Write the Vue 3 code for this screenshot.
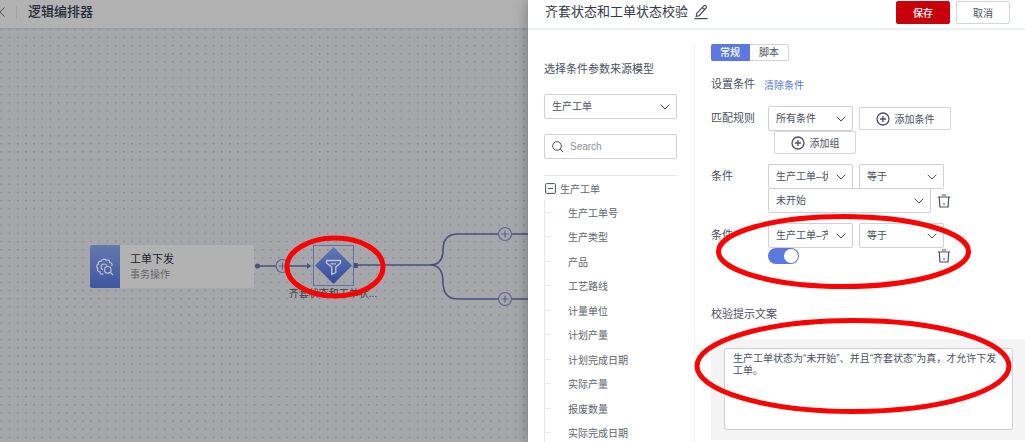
<script setup>
import { ref } from 'vue'

const model = ref('生产工单')
const keyword = ref('')
const matchRule = ref('所有条件')
const fieldA = ref('生产工单–状态')
const fieldB = ref('生产工单–齐套状态')
const operatorA = ref('等于')
const operatorB = ref('等于')
const valueA = ref('未开始')
const kitReady = ref(true)
const message = ref('生产工单状态为“未开始”、并且“齐套状态”为真，才允许下发工单。')

const fields = [
  '生产工单号',
  '生产类型',
  '产品',
  '工艺路线',
  '计量单位',
  '计划产量',
  '计划完成日期',
  '实际产量',
  '报废数量',
  '实际完成日期',
]
</script>

<template>
  <div class="page">
    <section class="workspace">
      <header class="topbar">
        <button class="back" type="button" aria-label="返回">
          <svg width="6" height="12" viewBox="0 0 6 12"><path d="M4.500 1.500L0 6l4.500 4.500" /></svg>
        </button>
        <span class="bar"></span>
        <h1>逻辑编排器</h1>
      </header>

      <div class="canvas">
        <svg class="edges" width="100%" height="100%" aria-hidden="true">
          <defs>
            <pattern id="dots" x="-3" y="-3" width="8.163" height="8.163" patternUnits="userSpaceOnUse">
              <circle cx="4.3" cy="4.3" r="0.8" fill="#85878d" stroke="none" />
            </pattern>
          </defs>
          <rect width="100%" height="100%" fill="url(#dots)" stroke="none" />
          <g fill="none" stroke="#48517f" stroke-width="1.6">
            <path d="M258 238H309" />
            <path d="M357 237H430C438 237 443 232 443 222C443 212 448 206 458 206H540" />
            <path d="M430 237C438 237 443 242 443 254C443 265 448 271 458 271H540" />
          </g>
          <g fill="#48517f" stroke="none">
            <circle cx="257.500" cy="238" r="2.500" />
            <path d="M307 235l4 3-4 3z" />
            <rect x="353" y="235" width="5" height="5" rx="1" />
          </g>
          <g fill="#a5a7ad" stroke="#5d668f" stroke-width="1.2">
            <circle cx="282.500" cy="238" r="6.500" />
            <circle cx="505" cy="206" r="6.500" />
            <circle cx="505" cy="271" r="6.500" />
            <path d="M279 238h7M282.500 234.500v7M501.500 206h7M505 202.500v7M501.500 271h7M505 267.500v7" />
          </g>
        </svg>

        <article class="task">
          <div class="task-icon">
            <svg width="18" height="18" viewBox="0 0 18 18">
              <path d="M7.300 15.800C5.800 17 3.700 15.900 4 13.900 2 14 .7 12 2 10.400.1 9.400.3 6.800 2.400 6.200 1.700 4.200 3.400 2.700 5.200 3.300 5.900 1 8.700.4 10 2.300c1.800-1 3.800.2 3.700 2.200 2 .1 3 2.200 1.900 3.700M7 11.900C3.800 10.300 4.700 6 8 6c1.500 0 2.400.7 2.900 1.800" />
              <circle cx="11.800" cy="11.800" r="3.300" />
              <path d="M14.200 14.200L17 17" />
            </svg>
          </div>
          <div class="task-text">
            <strong>工单下发</strong>
            <span>事务操作</span>
          </div>
        </article>

        <div class="decision">
          <svg width="41" height="41" viewBox="0 0 41 41">
            <defs>
              <linearGradient id="blue" x1="0" y1="0" x2="0" y2="1">
                <stop offset="0" stop-color="#6178b6" />
                <stop offset="1" stop-color="#354b9c" />
              </linearGradient>
            </defs>
            <rect x=".5" y=".5" width="40" height="40" fill="none" stroke="#5e71aa" />
            <path d="M20.500 2L39 20.500 20.500 39 2 20.500z" fill="url(#blue)" stroke="none" />
            <path d="M13.500 15.500h14v2.500l-4.700 4v5.500l-4 2v-7.500L13.500 18zM17.500 18.800h5.500" fill="none" stroke="#c3c7d4" stroke-width="1.300" stroke-linejoin="round" />
          </svg>
          <span>齐套状态和工单状...</span>
        </div>
      </div>
    </section>

    <aside class="drawer">
      <header class="drawer-head">
        <h2>齐套状态和工单状态校验</h2>
        <button class="icon-btn edit" type="button" aria-label="编辑名称">
          <svg width="14" height="16" viewBox="0 0 14 16"><path d="M2.200 12.500L2.800 9.300 9.800 1.900q1.100-1 2.100 0t.1 2.100L5.200 11.600zM8.300 3.400l2.200 2.100M.3 14.700h13.400" /></svg>
        </button>
        <span class="spacer"></span>
        <button class="btn primary" type="button">保存</button>
        <button class="btn" type="button">取消</button>
      </header>

      <div class="drawer-body">
        <section class="source">
          <h3><label for="model">选择条件参数来源模型</label></h3>
          <div class="select">
            <select id="model" v-model="model"><option>生产工单</option></select>
            <svg width="10" height="6" viewBox="0 0 10 6"><path d="M.7.700L5 5 9.300.700" /></svg>
          </div>
          <div class="search">
            <svg width="12" height="12" viewBox="0 0 12 12"><circle cx="5" cy="5" r="4.300" /><path d="M8.200 8.200l3 3" /></svg>
            <input v-model="keyword" type="text" placeholder="Search" aria-label="Search" />
          </div>
          <div class="tree">
            <div class="root">
              <svg width="11" height="11" viewBox="0 0 11 11"><rect x=".6" y=".6" width="9.800" height="9.800" rx="1" /><path d="M3 5.500h5" /></svg>
              <span>生产工单</span>
            </div>
            <ul>
              <li v-for="field in fields" :key="field">{{ field }}</li>
            </ul>
          </div>
        </section>

        <section class="settings">
          <div class="tabs">
            <button class="tab active" type="button">常规</button>
            <button class="tab" type="button">脚本</button>
          </div>

          <div class="title-row">
            <h3>设置条件</h3>
            <a href="#">清除条件</a>
          </div>

          <div class="field">
            <label for="rule">匹配规则</label>
            <div>
              <div class="line">
                <div class="select short">
                  <select id="rule" v-model="matchRule"><option>所有条件</option></select>
                  <svg width="10" height="6" viewBox="0 0 10 6"><path d="M.7.700L5 5 9.300.700" /></svg>
                </div>
                <button class="btn add" type="button">
                  <svg width="14" height="14" viewBox="0 0 14 14"><circle cx="7" cy="7" r="6" /><path d="M4 7h6M7 4v6" /></svg>添加条件
                </button>
              </div>
              <button class="btn add group" type="button">
                <svg width="14" height="14" viewBox="0 0 14 14"><circle cx="7" cy="7" r="6" /><path d="M4 7h6M7 4v6" /></svg>添加组
              </button>
            </div>
          </div>

          <div class="field">
            <label for="fieldA">条件</label>
            <div>
              <div class="line">
                <div class="select short">
                  <select id="fieldA" v-model="fieldA"><option>生产工单–状态</option></select>
                  <svg width="10" height="6" viewBox="0 0 10 6"><path d="M.7.700L5 5 9.300.700" /></svg>
                </div>
                <div class="select short">
                  <select v-model="operatorA" aria-label="运算符"><option>等于</option></select>
                  <svg width="10" height="6" viewBox="0 0 10 6"><path d="M.7.700L5 5 9.300.700" /></svg>
                </div>
              </div>
              <div class="line value">
                <div class="select long">
                  <select v-model="valueA" aria-label="值"><option>未开始</option></select>
                  <svg width="10" height="6" viewBox="0 0 10 6"><path d="M.7.700L5 5 9.300.700" /></svg>
                </div>
                <button class="icon-btn" type="button" aria-label="删除条件">
                  <svg width="14" height="14" viewBox="0 0 14 14"><path d="M.7 3h12.600M4.800 1h4.400M2.300 3l.6 10h8.200l.6-10M7 9v1.800" /></svg>
                </button>
              </div>
            </div>
          </div>

          <div class="field">
            <label for="fieldB">条件</label>
            <div>
              <div class="line">
                <div class="select short">
                  <select id="fieldB" v-model="fieldB"><option>生产工单–齐套状态</option></select>
                  <svg width="10" height="6" viewBox="0 0 10 6"><path d="M.7.700L5 5 9.300.700" /></svg>
                </div>
                <div class="select short">
                  <select v-model="operatorB" aria-label="运算符"><option>等于</option></select>
                  <svg width="10" height="6" viewBox="0 0 10 6"><path d="M.7.700L5 5 9.300.700" /></svg>
                </div>
              </div>
              <div class="line switch-line">
                <input v-model="kitReady" class="switch" type="checkbox" aria-label="齐套状态" />
                <button class="icon-btn" type="button" aria-label="删除条件">
                  <svg width="14" height="14" viewBox="0 0 14 14"><path d="M.7 3h12.600M4.800 1h4.400M2.300 3l.6 10h8.200l.6-10M7 9v1.800" /></svg>
                </button>
              </div>
            </div>
          </div>

          <h3 class="message-label"><label for="message">校验提示文案</label></h3>
          <div class="message">
            <textarea id="message" v-model="message"></textarea>
          </div>
        </section>
      </div>
    </aside>

    <svg class="marks" width="100%" height="100%" aria-hidden="true">
      <ellipse cx="335" cy="267" rx="48" ry="29" />
      <ellipse cx="843.500" cy="251.500" rx="125" ry="35" />
      <ellipse cx="853" cy="366" rx="156" ry="45.500" />
    </svg>
  </div>
</template>

<style>
body {
  margin: 0;
}
</style>

<style scoped>
* {
  box-sizing: border-box;
}
.page {
  position: relative;
  display: flex;
  height: 100vh;
  overflow: hidden;
  font-family: "Liberation Sans", "Noto Sans CJK SC", sans-serif;
  font-size: 10px;
  color: #4b5062;
}
h1,
h2,
h3 {
  margin: 0;
  font-weight: 400;
}
button,
input,
select,
textarea {
  font: inherit;
  color: inherit;
}
svg {
  flex: none;
  fill: none;
  stroke: #4b5062;
}

.workspace {
  flex: 1;
  min-width: 0;
  display: flex;
  flex-direction: column;
  background: #a5a7ab;
}
.topbar {
  display: flex;
  align-items: center;
  height: 28px;
  padding-bottom: 4px;
  background: #b2b2b2;
  box-shadow: 0 1px 2px #96989c;
  z-index: 1;
}
.back {
  display: flex;
  padding: 0;
  border: 0;
  background: none;
}
.bar {
  width: 1px;
  height: 13px;
  margin: 0 11px 0 10px;
  background: #a3a4a6;
}
.topbar h1 {
  font-size: 13px;
  line-height: 20px;
  font-weight: 500;
  color: #272b38;
}
.canvas {
  position: relative;
  flex: 1;
  overflow: hidden;
}
.edges {
  position: absolute;
  inset: 0;
}
.task {
  position: absolute;
  left: 90px;
  top: 217px;
  display: flex;
  width: 164px;
  height: 43px;
  border-radius: 2px;
  overflow: hidden;
  background: #b2b2b2;
}
.task-icon {
  display: flex;
  align-items: center;
  justify-content: center;
  width: 30px;
  background: linear-gradient(#6579ae, #3f54a2);
}
.task-icon svg {
  stroke: #bcc1d2;
  stroke-width: 1.2;
}
.task-text {
  display: flex;
  flex-direction: column;
  justify-content: center;
  padding-left: 10px;
  line-height: 16px;
  color: #62646a;
}
.task-text strong {
  font-size: 11px;
  font-weight: 400;
  color: #20232c;
}
.decision {
  position: absolute;
  left: 288px;
  top: 217px;
  display: flex;
  flex-direction: column;
  align-items: center;
  width: 90px;
  line-height: 16px;
  white-space: nowrap;
  color: #3b3e48;
}

.drawer {
  position: relative;
  z-index: 2;
  display: flex;
  flex-direction: column;
  width: 497px;
  background: #fff;
  box-shadow: -2px 0 12px rgba(0, 0, 0, 0.25);
}
.drawer-head {
  display: flex;
  align-items: center;
  gap: 6px;
  height: 30px;
  padding: 0 15px 4px 17px;
  border-bottom: 2px solid #edf0f1;
}
.drawer-head h2 {
  font-size: 13px;
  line-height: 20px;
  color: #343949;
}
.icon-btn {
  display: flex;
  padding: 0;
  border: 0;
  background: none;
}
.icon-btn svg {
  stroke-width: 1.2;
}
.spacer {
  flex: 1;
}
.btn {
  display: flex;
  align-items: center;
  justify-content: center;
  width: 54px;
  height: 23px;
  padding: 0;
  border: 1px solid #d3d4dc;
  border-radius: 2px;
  background: #fff;
}
.primary {
  border-color: #c7000b;
  background: #c7000b;
  color: #fff;
  font-weight: 500;
}
.drawer-body {
  flex: 1;
  min-height: 0;
  display: flex;
  padding-top: 14px;
}
.source {
  width: 167px;
  padding: 17px 17px 0 16px;
  border-right: 1px solid #eef0f3;
  overflow: hidden;
}
h3 {
  font-size: 11px;
  line-height: 16px;
}
.select {
  position: relative;
  height: 25px;
}
.source .select {
  margin-top: 17px;
}
select {
  display: block;
  appearance: none;
  width: 100%;
  height: 100%;
  margin: 0;
  padding: 0 24px 0 7px;
  border: 1px solid #cfd0d9;
  border-radius: 2px;
  background: #fff;
  outline: 0;
}
.select svg {
  position: absolute;
  right: 7px;
  top: 10px;
  pointer-events: none;
}
.search {
  display: flex;
  align-items: center;
  gap: 6px;
  height: 25px;
  margin-top: 15px;
  padding: 0 7px;
  border: 1px solid #cfd0d9;
  border-radius: 2px;
}
.search input {
  flex: 1;
  min-width: 0;
  padding: 0;
  border: 0;
  outline: 0;
  background: none;
}
.search input::placeholder {
  color: #8d909b;
}
.tree {
  margin-top: 16px;
  border-top: 1px solid #e6e7eb;
  color: #60646f;
}
.root {
  display: flex;
  align-items: center;
  gap: 4px;
  height: 24px;
  padding-left: 1px;
}
.tree ul {
  display: grid;
  grid-auto-rows: 1fr;
  height: 245px;
  margin: 0;
  padding: 0;
  border-left: 1px solid #e6e8ec;
  list-style: none;
}
.tree li {
  display: flex;
  align-items: center;
  gap: 17px;
}
.tree li::before {
  content: "";
  width: 6px;
  height: 1px;
  background: #e6e8ec;
}

.settings {
  flex: 1;
  min-width: 0;
  padding-left: 16px;
  overflow: hidden;
}
.tabs {
  display: flex;
}
.tab {
  width: 39px;
  height: 17px;
  padding: 0;
  border: 1px solid #d3d4dc;
  border-left: 0;
  border-radius: 0 2px 2px 0;
  background: #fff;
  line-height: 15px;
}
.tab.active {
  border-color: #5b78df;
  border-radius: 2px 0 0 2px;
  background: #5b78df;
  color: #fff;
  font-weight: 500;
}
.title-row {
  display: flex;
  align-items: center;
  gap: 9px;
  margin-top: 15px;
}
a {
  color: #5b78df;
  text-decoration: none;
}
.field {
  display: grid;
  grid-template-columns: 57px 1fr;
  margin-top: 10px;
}
.title-row + .field {
  margin-top: 14px;
}
.field > label {
  font-size: 11px;
  line-height: 25px;
}
.line {
  display: flex;
  align-items: center;
  gap: 6px;
  height: 25px;
}
.short {
  width: 85px;
}
.long {
  width: 163px;
}
.value {
  margin-top: -1px;
}
.add {
  gap: 5px;
  width: 92px;
}
.add svg {
  stroke-width: 1.3;
}
.group {
  width: 82px;
  margin-left: 6px;
}
.switch-line {
  justify-content: space-between;
  width: 183px;
  height: 16px;
}
.switch {
  appearance: none;
  width: 31px;
  height: 16px;
  margin: 0;
  padding: 1px;
  border-radius: 8px;
  background: #b9bcc6;
}
.switch::before {
  content: "";
  display: block;
  width: 14px;
  height: 14px;
  border-radius: 50%;
  background: #fff;
}
.switch:checked {
  background: #5b78df;
}
.switch:checked::before {
  margin-left: auto;
}
.message-label {
  margin-top: 42px;
}
.message {
  margin-top: 17px;
  padding: 9px 12px 10px 13px;
  background: #f4f4f4;
}
textarea {
  display: block;
  width: 100%;
  height: 82px;
  padding: 4px 8px;
  border: 1px solid #cfd0d9;
  border-radius: 2px;
  outline: 0;
  resize: none;
  line-height: 12px;
  background: #fff;
}

.marks {
  position: absolute;
  inset: 0;
  z-index: 3;
  pointer-events: none;
}
.marks ellipse {
  stroke: #f00;
  stroke-width: 5;
}
</style>
